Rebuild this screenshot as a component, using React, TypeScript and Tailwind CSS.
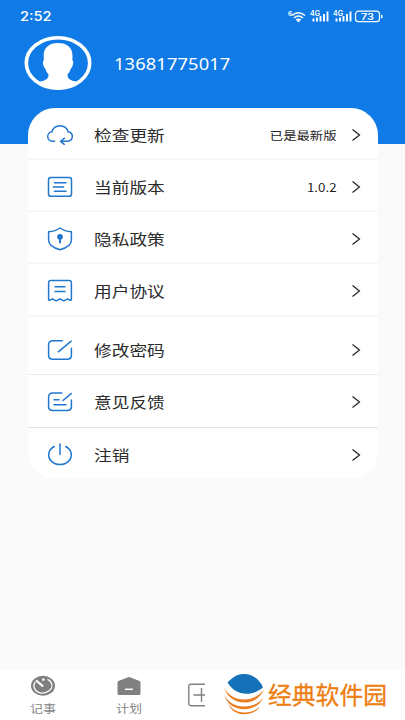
import type { ReactNode } from "react";

const rows = [
  { label: "检查更新", icon: "cloud", value: "已是最新版", box: "h-[52px] border-b-2 border-[#f7f7f7] pt-[3px]" },
  { label: "当前版本", icon: "doc", value: "1.0.2", box: "h-[52px] border-b-2 border-[#f7f7f7] pt-[3px]" },
  { label: "隐私政策", icon: "shield", value: "", box: "h-[52px] border-b-2 border-[#f7f7f7] pt-[3px]" },
  { label: "用户协议", icon: "receipt", value: "", box: "h-[53px] border-b-2 border-[#f7f7f7] pt-[2px]" },
  { label: "修改密码", icon: "edit", value: "", box: "h-[58px] border-b border-[#ececec] pt-[8px]" },
  { label: "意见反馈", icon: "feedback", value: "", box: "h-[53px] border-b border-[#e2e2e2] pt-[2px]" },
  { label: "注销", icon: "power", value: "", box: "h-[52px] pt-px" },
];

// every icon is drawn in a 28x28 box
const icons: Record<string, ReactNode> = {
  cloud: (
    <>
      <path d="M8.500 20.300H7.200A5.200 4.800 0 0 1 5.900 10.800C6.600 7.300 10 4.700 14 4.700s7.400 2.600 8.100 6.100A5.200 4.800 0 0 1 21.500 20.300H15" />
      <path d="M18.300 17.300 14.600 20.300l3.700 3" />
    </>
  ),
  doc: (
    <>
      <rect x="2.500" y="4.500" width="23" height="18.800" rx="2.400" />
      <path d="M8.500 9.800h11.500M7.400 14h10.200M8.500 18.200h11.500" />
    </>
  ),
  shield: (
    <>
      <path d="M14 3c2.800 2 6.700 3.500 11.400 3.700v8.600c0 4.500-5.200 7.700-11.400 9.500C7.800 23 2.600 19.800 2.600 15.300V6.700C7.300 6.500 11.200 5 14 3Z" />
      <circle cx="14" cy="11.800" r="2.900" fill="currentColor" stroke="none" />
      <path d="M14 13v4.600" strokeWidth="2" />
    </>
  ),
  receipt: (
    <>
      <path d="M2.600 22.600V5.600Q2.600 3.400 5 3.400H23Q25.400 3.400 25.400 5.600V22.600Q25 24 23.200 22.800L21.600 21.800L17.800 23.800L14 21.800L10.200 23.800L6.400 21.800L4.600 22.800Q2.800 23.800 2.600 22.600Z" />
      <path d="M9 9.800h10M9 14.400h10" />
    </>
  ),
  edit: (
    <>
      <path d="M16.300 4.800H7Q2.600 4.800 2.600 8.800v10.600Q2.600 23.200 7 23.200H21Q25.400 23.200 25.400 19.400V12.300" />
      <path d="M25.200 5.200 12.300 15.800" />
    </>
  ),
  feedback: (
    <>
      <path d="M15.800 5H7Q2.600 5 2.600 9v9.800Q2.600 22.600 7 22.600H21Q25.400 22.600 25.400 18.800V12" />
      <path d="M25.200 5.600 17 12.500M8 11.800h5M8 16.800h12" />
    </>
  ),
  power: (
    <>
      <path d="M8.300 5.500A11.300 9.700 0 1 0 19.700 5.500" />
      <path d="M14 3v10.600" />
    </>
  ),
};

function StatusIcons() {
  return (
    <svg width="98" height="16" viewBox="0 0 98 16" fill="none" stroke="white">
      <g fill="white" stroke="none" fontFamily="Inter, sans-serif" fontWeight="600">
        <text x="0" y="7" fontSize="6.500">6</text>
        <text x="22" y="7" fontSize="7" textLength="10">4G</text>
        <text x="45" y="7" fontSize="7" textLength="10">4G</text>
      </g>
      <path d="M4 6.500Q10.500 1 17 6.500M6 9Q10.500 5 15 9M8.200 11.200Q10.500 9.400 12.800 11.200" strokeWidth="1.500" />
      <circle cx="10.500" cy="12" r="1.200" fill="white" stroke="none" />
      <path d="M25.500 12.500v-3M29 12.500v-4M32.500 12.500V7M36 12.500V5M39.500 12.500V2.500" strokeWidth="1.900" />
      <path d="M48.500 12.500v-3M52 12.500v-4M55.500 12.500V7M59 12.500V5M62.500 12.500V2.500" strokeWidth="1.900" />
      <rect x="67.500" y="2.200" width="24" height="10.500" rx="3" strokeWidth="1.200" />
      <path d="M93.800 5.800v3.500" strokeWidth="1.400" />
      <text x="73" y="10.900" fontSize="9.500" fontFamily="Inter, sans-serif" fontWeight="600" textLength="13" lengthAdjust="spacingAndGlyphs" fill="white" stroke="none">
        73
      </text>
    </svg>
  );
}

function Avatar() {
  return (
    <svg width="68" height="56" viewBox="0 0 68 56">
      <ellipse cx="34" cy="28" rx="31.700" ry="25.300" fill="none" stroke="white" strokeWidth="3.600" />
      <path
        d="M34 8C43 8 48.800 12.500 48.500 21.500L48.300 25Q49.800 26 48.800 30Q48.400 32.200 46.900 33.400Q45.800 37 43.500 39.500Q42.500 45.500 53 46.800Q46 54.500 34 54.500Q22 54.500 15 46.800Q25.500 45.500 24.500 39.500Q22.300 37 21.200 33.400Q19.700 32.200 19.300 30Q18.300 26 19.900 25L19.700 21.500C19.300 12.500 25 8 34 8Z"
        fill="white"
      />
    </svg>
  );
}

function Logo() {
  return (
    <svg width="42" height="44" viewBox="0 0 42 44">
      <path d="M4.500 10.500C10 4.500 15 2 21 2C30 2 37 8 40 15.500C34 20 29 21.800 23.500 21.800C15 21.800 9 17.500 4.500 10.500Z" fill="#1672b8" />
      <g fill="#ea7f22">
        <path d="M1 15.500C5 23 12 27.500 21 27.500C29 27.500 36 24 41 17.500C37 26 30 30.500 21.500 30.500C12 30.500 4 25 1 15.500Z" />
        <path d="M1.300 23C5 30 12 34.500 21 34.500C29 34.500 36 31.500 40.500 25.500C37 33 30 37.200 21.500 37.200C12 37.200 4 32.500 1.300 23Z" />
        <path d="M5 31.500C9 37.500 14.500 40.500 21.500 40.500C27.500 40.500 33 38.500 37 34.500C33.500 40 28 42.300 21.500 42.300C14 42.300 8 39 5 31.500Z" />
      </g>
    </svg>
  );
}

export default function App() {
  return (
    <div className="flex h-[720px] w-[405px] flex-col overflow-hidden bg-[#fafafa] font-['Noto_Sans_CJK_SC',sans-serif]">
      <header className="h-[144px] shrink-0 bg-[#107be6] text-white">
        <div className="flex h-8 items-center justify-between pt-px pr-[19px] pl-5">
          <span className="origin-left scale-x-[1.130] pt-px font-['Inter',sans-serif] text-[13px] font-medium">2:52</span>
          <StatusIcons />
        </div>
        <div className="flex items-center gap-[22px] pt-[3px] pl-6">
          <Avatar />
          <span className="origin-left scale-x-[1.180] pt-[3px] font-['Noto_Sans',sans-serif] text-[15.500px] tracking-[0.100px]">13681775017</span>
        </div>
      </header>

      <main className="flex-1">
        <div className="relative mx-auto -mt-9 h-[371px] w-[350px] rounded-[27px] bg-white">
          {rows.map((row) => (
            <div key={row.label} className={`flex items-center pr-[17px] pl-[18px] ${row.box}`}>
              <svg width="28" height="28" viewBox="0 0 28 28" fill="none" stroke="currentColor" strokeWidth="1.500" strokeLinecap="round" strokeLinejoin="round" className="text-[#2077cc]">
                {icons[row.icon]}
              </svg>
              <span className="ml-5 origin-left scale-x-[1.180] pt-px text-[15px] text-[#2b2b2b]">{row.label}</span>
              <span className="mr-[14px] ml-auto origin-right scale-x-[1.160] pt-[2px] text-[11.500px] text-[#222]">{row.value}</span>
              <svg width="10" height="14" viewBox="0 0 10 14" fill="none" stroke="#222" strokeWidth="1.200">
                <path d="M1.500 1.500 8.500 7l-7 5.500" />
              </svg>
            </div>
          ))}
        </div>
      </main>

      <nav className="flex h-[50px] shrink-0 bg-white text-[#858585]">
        <div className="flex w-[86px] flex-col items-center pt-[5px]">
          <svg width="24" height="22" viewBox="0 0 24 22" fill="none" stroke="white">
            <ellipse cx="12" cy="10.800" rx="12" ry="10" fill="#808080" stroke="none" />
            <path d="M4.400 6.600C1.500 10.500 3 15.500 7.500 17.300C12.500 19.200 18.500 17.300 20.500 13C22 9.500 20 5.800 16.500 4.300" strokeWidth="1.300" />
            <path d="M5.800 6 11.500 10.800" strokeWidth="2.200" strokeLinecap="round" />
            <circle cx="12.300" cy="4.600" r="1.300" fill="white" stroke="none" />
          </svg>
          <span className="scale-x-[1.180] text-[11px] leading-[22px]">记事</span>
        </div>
        <div className="flex w-[86px] flex-col items-center pt-[5px]">
          <svg width="24" height="22" viewBox="0 0 24 22">
            <path d="M.5 7.500Q.5 6.300 2 5.700L10.500 2.400Q12 1.800 13.500 2.400L22 5.700Q23.500 6.300 23.500 7.500V18.500Q23.500 20 22 20H2Q.5 20 .5 18.500Z" fill="#808080" />
            <path d="M8 14.300h8" stroke="white" strokeWidth="1.500" />
          </svg>
          <span className="scale-x-[1.180] text-[11px] leading-[22px]">计划</span>
        </div>
        <div className="w-[33px] overflow-hidden pt-[13px] pl-4">
          <svg width="26" height="24" viewBox="0 0 26 24" fill="none" stroke="#808080" strokeWidth="1.400" className="max-w-none">
            <rect x=".8" y="1.200" width="24" height="21.500" rx="2" />
            <path d="M5.500 12h15M13.500 5v14" />
          </svg>
        </div>
        <div className="flex flex-1 items-start pt-[2px] pl-[18px]">
          <Logo />
          <span className="ml-[3px] pt-[6px] text-[23.800px] leading-[31px] whitespace-nowrap text-[#ee7d12] [-webkit-text-stroke:0.300px_#ee7d12]">经典软件园</span>
        </div>
      </nav>
    </div>
  );
}
